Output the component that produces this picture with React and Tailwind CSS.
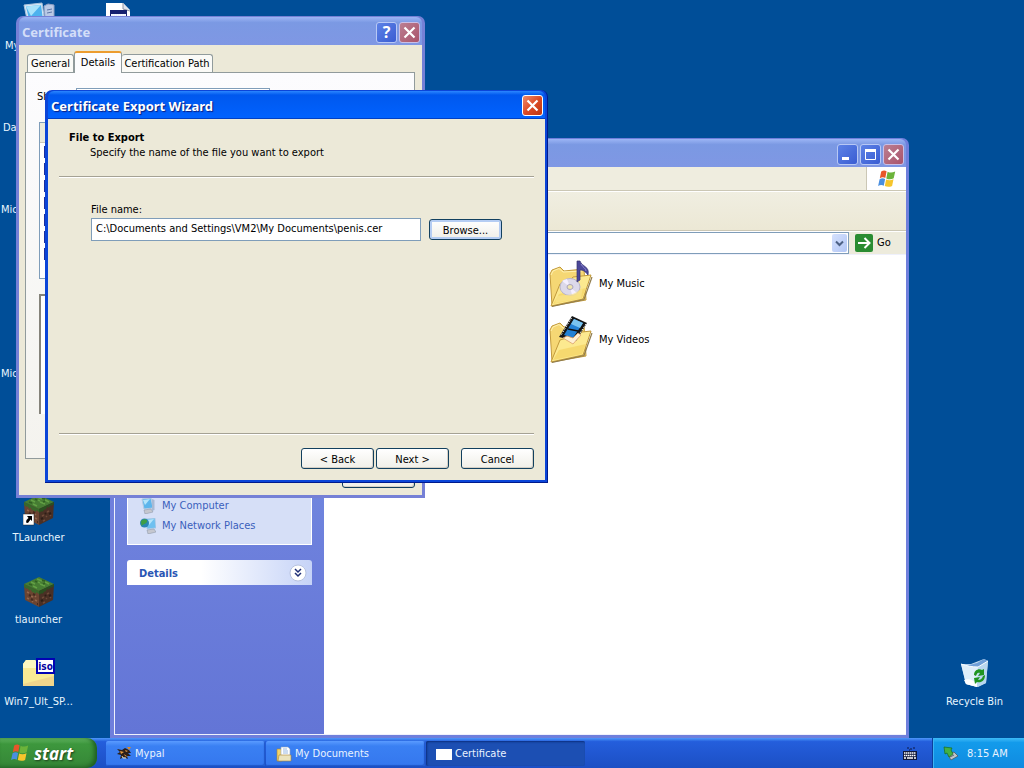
import React from "react";

/* ---------- Icons ---------- */

function WindowsFlag({ className }) {
  return (
    <svg viewBox="0 0 20 18" className={className} aria-hidden="true">
      <path d="M4.2 1.6C6 .4 7.900 .3 9.600 1.300L8.300 8C6.500 7 4.700 7.100 2.800 8.200Z" fill="#e8562a" />
      <path d="M10.600 1.700C12.500 2.700 15 3.100 18.200 1.500L16.700 8.300C14.400 9.600 11.500 9.500 9.300 8.400Z" fill="#6cb33a" />
      <path d="M2.600 9.200C4.500 8.100 6.400 8.100 8.100 9L6.800 15.700C5 14.700 3.100 14.800 1.100 16Z" fill="#4a8fe0" />
      <path d="M9.100 9.500C11.300 10.500 13.700 10.600 16.500 9.300L15.100 15.900C12.800 17.200 10 17.100 7.800 16.100Z" fill="#f6c52c" />
    </svg>
  );
}

function MonitorIcon({ className }) {
  return (
    <svg viewBox="0 0 32 32" className={className} aria-hidden="true">
      <path d="M1 3L19 1L22 20L5 22Z" fill="#d8e6f4" stroke="#a9c4de" />
      <path d="M3 4.500L18 3L20 18L6.500 19.500Z" fill="#4db2ee" />
      <path d="M3 4.500L18 3L8 14Z" fill="#a9e3fb" />
      <path d="M21 4L25 2L31 3L31 25L23 27Z" fill="#b9c9e6" stroke="#8fa1c6" />
      <path d="M24 8L29 7M24 11L29 10" stroke="#5d76a8" />
      <path d="M9 22L19 21L23 28L8 29Z" fill="#e8e6dc" stroke="#a5a295" />
    </svg>
  );
}

function DocumentIcon({ className }) {
  return (
    <svg viewBox="0 0 32 32" className={className} aria-hidden="true">
      <path d="M4 1H21L28 8V31H4Z" fill="#fff" />
      <path d="M21 1V7L28 9" fill="#dfe4ec" stroke="#8d95a5" />
      <rect x="8.500" y="8.500" width="16" height="18" fill="#eef1fb" stroke="#16206e" />
      <rect x="8" y="8" width="17" height="4" fill="#16206e" />
      <path d="M9 13H24" stroke="#fff" strokeDasharray="1 1" />
    </svg>
  );
}

function GrassBlock({ className, shortcut }) {
  return (
    <svg viewBox="0 0 32 32" className={className} aria-hidden="true">
      <path d="M1 8L16 14V31L2 24Z" fill="#6b4431" />
      <path d="M31 8L16 14V31L30 24Z" fill="#4a3025" />
      <path d="M1 8L16 1L31 8L16 15Z" fill="#467c33" />
      <path d="M1 8L16 15V18L13 16V18L10 16V17L7 13V15L4 12V13L1 11Z" fill="#38682a" />
      <path d="M31 8L16 15V19L19 17V18L22 15V16L25 12V14L28 11V12L31 10Z" fill="#2a5020" />
      <path d="M8 6L12 8M14 3L19 5M17 8L22 10M22 6L26 8M10 10L14 12M15 6L17 7" stroke="#62a044" strokeWidth="1.500" />
      <path d="M6 8L9 9M19 4L22 5M12 5L14 6M20 8L22 7" stroke="#2f6122" strokeWidth="1.500" />
      <path d="M4 16L6 17M8 20L10 21M4 22L6 23M12 24L14 25M9 25L10 26M12 20L13 21" stroke="#92664c" strokeWidth="1.500" />
      <path d="M6 19L8 20M10 18L12 19M8 23L10 24M14 28L15 28" stroke="#452a1f" strokeWidth="2" />
      <path d="M19 22L21 21M24 18L26 17M20 27L22 26M27 22L28 21M23 23L24 22" stroke="#6e4a38" strokeWidth="1.500" />
      <path d="M18 25L20 24M26 20L28 19M22 20L23 19" stroke="#2e1e17" strokeWidth="2" />
      {shortcut && (
        <g>
          <rect x="0" y="20" width="11" height="11" fill="#fff" stroke="#222" strokeWidth=".5" />
          <path d="M4 22H9V27L7.500 25.500L5 29L3 28.500L3.500 26L5.500 24Z" fill="#000" />
        </g>
      )}
    </svg>
  );
}

function IsoIcon({ className }) {
  return (
    <svg viewBox="0 0 32 32" className={className} aria-hidden="true">
      <path d="M0 6L3 2H12L14 4H31V28H0Z" fill="#f8e994" />
      <path d="M0 6L3 2H12L14 4V10H0Z" fill="#fdf7c0" />
      <path d="M0 28H31V18L0 26Z" fill="#f0d58c" />
      <rect x="14" y="1" width="17" height="14" fill="#fff" stroke="#0202b4" strokeWidth="2" />
      <text x="22.500" y="12" textAnchor="middle" fontFamily="DejaVu Sans Condensed, sans-serif" fontWeight="700" fontSize="10" fill="#0202a0">
        iso
      </text>
    </svg>
  );
}

function RecycleBin({ className }) {
  return (
    <svg viewBox="0 0 32 32" className={className} aria-hidden="true">
      <path d="M2 6L12 6L25 1L29 3L27 25L19 29L7 26Z" fill="#c3dcf1" />
      <path d="M2 6C9 8 14 6 18 5L25 1L29 3L19 10Z" fill="#6f9fd8" />
      <path d="M2 6C8 8 13 9 19 9L18 29L7 26Z" fill="#deeefa" />
      <path d="M19 9L29 3L27 25L18 29Z" fill="#b9d7ef" />
      <path d="M2 6C8 8 13 9 19 9L29 3" fill="none" stroke="#f6fbff" />
      <path d="M5 22C10 20 14 22 18 26V29L7 26Z" fill="#fff" />
      <path d="M15 17C15 12 20 10 23 12L25 11V17L19 18L21 15C19 14 18 15 17 18Z" fill="#1f9420" />
      <path d="M26 17C26 23 22 25 18 24L16 26L15 20L21 19L19 22C21 22 23 21 24 18Z" fill="#1f9420" />
    </svg>
  );
}

function FolderBack() {
  return (
    <g>
      <path d="M4 14L6 10L14 7L18 11L38 9L40 40L6 46Z" fill="#f5d774" stroke="#c29a3c" />
      <path d="M5 15L7 11L13 8.500L17 12L36 11" fill="none" stroke="#fff1b0" />
    </g>
  );
}

function FolderFront() {
  return (
    <g>
      <path d="M5 46L14 24L24 21L27 17L45 15L37 39Z" fill="#fce98f" stroke="#c29a3c" />
      <path d="M7 44L13 34L40 28L36 38Z" fill="#f2d15e" opacity=".65" />
      <path d="M6 46.500L38 39.500L46 17" fill="none" stroke="#8f7c4e" strokeWidth="1.200" />
    </g>
  );
}

function MusicFolder({ className }) {
  return (
    <svg viewBox="0 0 48 48" className={className} aria-hidden="true">
      <FolderBack />
      <FolderFront />
      <ellipse cx="24" cy="27" rx="10" ry="8.500" fill="#dcd9ea" stroke="#b9b5cc" />
      <path d="M24 27L16 21A10 8 0 0 1 21 19ZM24 27L31 33A10 8 0 0 1 26 35Z" fill="#f4efff" />
      <ellipse cx="24" cy="27" rx="3" ry="2.500" fill="#f1e7ad" stroke="#a9a2c0" />
      <path d="M11 36C22 34 27 37 37 27L35 38L9 43Z" fill="#fae48b" opacity=".7" />
      <path d="M31 1L34 1C36 7 44 6 42 15C39 11 37 10 34 10V20L31 22Z" fill="#4b4799" stroke="#34316f" strokeWidth=".700" />
      <path d="M35 4C37 8 40 8 40 11" stroke="#8d87d1" fill="none" />
    </svg>
  );
}

function VideoFolder({ className }) {
  return (
    <svg viewBox="0 0 48 48" className={className} aria-hidden="true">
      <FolderBack />
      <FolderFront />
      <path d="M26 0L41 7L30 25L13 21Z" fill="#151515" />
      <path d="M28 3L37 7L27 22L18 19Z" fill="#2381d5" />
      <path d="M28 3L37 7L34 12L25 8Z" fill="#7ac4f0" />
      <path d="M22 13L32 15" stroke="#101010" strokeWidth="1.500" />
      <path d="M25.500 2L14.500 20M40 8L29.500 24" stroke="#fff" strokeDasharray="1.500 1.500" />
      <path d="M17 22L27 28L35 19L32 17L27 22L21 20Z" fill="#fff0d2" stroke="#dba06c" strokeWidth=".800" />
    </svg>
  );
}

function NetworkIcon({ className }) {
  return (
    <svg viewBox="0 0 16 16" className={className} aria-hidden="true">
      <path d="M6 1L15 0L16 10L7 11Z" fill="#6fc0f0" stroke="#b4cae2" strokeWidth=".700" />
      <path d="M7 2L14 1L9 7Z" fill="#b5e4fa" />
      <circle cx="4.500" cy="5" r="4.500" fill="#2b86b4" />
      <path d="M1 3C4 0 8 1 7 4C6 6 3 6 1.500 8Z" fill="#3f9f45" />
      <path d="M7 12L14 11L16 14L8 16Z" fill="#c5c7cf" stroke="#8790a3" strokeWidth=".500" />
    </svg>
  );
}

function ComputerSmall({ className }) {
  return (
    <svg viewBox="0 0 16 16" className={className} aria-hidden="true">
      <path d="M2 1L11 0L13 10L4 11Z" fill="#5db5ec" stroke="#b4cae2" />
      <path d="M3 2L10 1L5 7Z" fill="#b5e4fa" />
      <path d="M12 1L14.500 2V12L12 13Z" fill="#a8b9d4" />
      <path d="M4 12L11 11L13 14L5 16Z" fill="#c5c7cf" stroke="#8790a3" strokeWidth=".500" />
    </svg>
  );
}

function BirdIcon({ className }) {
  return (
    <svg viewBox="0 0 16 16" className={className} aria-hidden="true">
      <path d="M1 3L6 4L9 2L13 4L15 7L12 7L15 10L11 10L12 13L8 11L4 13L5 9L1 8L4 6Z" fill="#2c1e18" />
      <path d="M4 5L8 6L5 8ZM9 4L12 5L10 6ZM8 8L12 11L9 10Z" fill="#e69a3c" />
      <path d="M11 1L15 1L13 4Z" fill="#d98a2d" />
      <path d="M6 10L7 12L10 12" stroke="#f1d9a4" fill="none" />
    </svg>
  );
}

function DocsFolderIcon({ className }) {
  return (
    <svg viewBox="0 0 16 16" className={className} aria-hidden="true">
      <path d="M1 3H5L6 5V15H1Z" fill="#f3d36c" stroke="#a88432" strokeWidth=".600" />
      <path d="M5 1H12L14 3V10H5Z" fill="#fff" stroke="#93a6be" strokeWidth=".600" />
      <path d="M7 3H11M7 5H12M7 7H12" stroke="#7fa6dc" strokeWidth=".800" />
      <path d="M3 9H15V15H2Z" fill="#ebe3bd" stroke="#a88432" strokeWidth=".600" />
    </svg>
  );
}

function KeyboardIcon({ className }) {
  return (
    <svg viewBox="0 0 14 13" className={className} aria-hidden="true">
      <path d="M4 1H6M7 2H9M10 1H12M6 3H7" stroke="#0b1646" />
      <rect x="0" y="4" width="14" height="9" fill="#10183a" />
      <path d="M1 6H13M1 8.500H13" stroke="#fff" strokeWidth="1.500" strokeDasharray="1.500 .500" />
      <path d="M1 11H3M4 11H10M11 11H13" stroke="#fff" strokeWidth="1.500" />
    </svg>
  );
}

function EjectIcon({ className }) {
  return (
    <svg viewBox="0 0 16 16" className={className} aria-hidden="true">
      <path d="M5 9L11 6L15 10L8 14Z" fill="#bfc5c9" stroke="#4e5a60" strokeWidth=".800" />
      <path d="M7 11L11 9" stroke="#5b666d" />
      <path d="M1 1L9 2L8 4L10 8L6 11L4 7L2 8Z" fill="#43b143" stroke="#176b1d" strokeWidth=".700" />
    </svg>
  );
}

/* ---------- Window parts ---------- */

function CrossGlyph() {
  return (
    <svg viewBox="0 0 19 19" className="size-full" aria-hidden="true">
      <path d="M4.500 4.500L14.500 14.500M14.500 4.500L4.500 14.500" stroke="#fff" strokeWidth="2.200" />
    </svg>
  );
}

const captionTone = {
  blue: "border-[#b7c8f5] bg-linear-to-br from-[#5d82e6] to-[#3a5cd2]",
  faded: "border-[#c9bfe6] bg-linear-to-br from-[#bb7f92] to-[#a9536b]",
  red: "border-white bg-linear-to-br from-[#ee8a6a] via-[#dc4a25] to-[#bd3612]",
};

function CaptionButton({ label, tone, children }) {
  return (
    <button type="button" aria-label={label} className={`size-[21px] shrink-0 rounded-[3px] border ${captionTone[tone]}`}>
      {children}
    </button>
  );
}

function TitleBar({ title, active, children }) {
  const tone = active
    ? "bg-linear-to-b from-[#2b86ff] via-[#0058ee] via-15% to-[#0062ff] text-white border-b border-[#0040c4] [text-shadow:1px_1px_1px_#0a1e80]"
    : "bg-linear-to-b from-[#9cb5f5] via-[#7b99e3] via-20% to-[#7f97e4] text-[#d3def8]";
  return (
    <header className={`flex h-[28px] shrink-0 items-center gap-[2px] rounded-t-[6px] pt-[2px] pr-[2px] pl-[3px] ${tone}`}>
      <h2 className="flex-1 font-['Noto_Sans','Open_Sans',sans-serif] text-[13px] leading-4 font-bold">{title}</h2>
      {children}
    </header>
  );
}

function PushButton({ children, focused }) {
  const ring = focused ? "shadow-[inset_0_0_0_2px_#b5cdf3]" : "shadow-[inset_-1px_-1px_0_#d6d0c5]";
  return (
    <button type="button" className={`h-[21px] w-[73px] rounded-[3px] border border-[#12405f] bg-linear-to-b from-white to-[#f0efe8] pt-px text-center leading-none ${ring}`}>
      {children}
    </button>
  );
}

function Rule() {
  return <hr className="border-0 border-t border-[#a5a294] shadow-[0_1px_0_#fff]" />;
}

/* ---------- Windows ---------- */

function ExplorerWindow() {
  return (
    <section aria-label="My Documents" className="absolute top-[138px] right-[115px] bottom-0 left-[110px] flex flex-col rounded-t-[7px] bg-[#6f7fdc] pt-px pr-[3px] pb-[3px] pl-[4px]">
      <TitleBar title="">
        <CaptionButton label="Minimize" tone="blue">
          <svg viewBox="0 0 19 19" className="size-full" aria-hidden="true"><rect x="4" y="12" width="7" height="3" fill="#fff" /></svg>
        </CaptionButton>
        <CaptionButton label="Maximize" tone="blue">
          <svg viewBox="0 0 19 19" className="size-full" aria-hidden="true"><path d="M4.500 5V14.500H14.500V5" fill="none" stroke="#fff" /><rect x="4" y="4" width="11" height="3" fill="#fff" /></svg>
        </CaptionButton>
        <CaptionButton label="Close" tone="faded"><CrossGlyph /></CaptionButton>
      </TitleBar>
      <div className="flex h-[24px] shrink-0 justify-end border-b border-[#cbc7b5] bg-[#efeddf]">
        <div className="flex w-[40px] items-center justify-center border-l border-[#cbc7b5] bg-white">
          <WindowsFlag className="h-[18px] w-[20px]" />
        </div>
      </div>
      <div className="h-[40px] shrink-0 border-t border-b border-t-white border-b-[#cbc7b5] bg-linear-to-b from-[#f0eee1] to-[#ece8d5]" />
      <div className="flex h-[23px] shrink-0 items-end border-t border-white bg-[#edebdc]">
        <div className="flex h-[22px] flex-1 items-center justify-end border border-[#7f9db9] bg-white pr-px">
          <button type="button" aria-label="Address list" className="flex h-[18px] w-[15px] items-center justify-center rounded-[2px] bg-linear-to-br from-[#d5e1fd] to-[#b2c6f5]">
            <svg viewBox="0 0 9 7" className="h-[7px] w-[9px]" aria-hidden="true"><path d="M1 1.500L4.500 5L8 1.500" fill="none" stroke="#4d6185" strokeWidth="2" /></svg>
          </button>
        </div>
        <button type="button" className="flex h-[22px] w-[57px] items-center gap-[4px] pl-[6px]">
          <svg viewBox="0 0 18 18" className="size-[18px]" aria-hidden="true">
            <rect width="18" height="18" rx="2" fill="#2a8c32" />
            <path d="M3 9H14M9.500 4L14.500 9L9.500 14" fill="none" stroke="#fff" strokeWidth="2" />
          </svg>
          Go
        </button>
      </div>
      <div className="flex min-h-0 flex-1 border border-r-0 border-[#eff1fc] bg-white">
        <aside className="flex w-[209px] shrink-0 flex-col gap-[15px] bg-linear-to-b from-[#7b9ee6] via-[#6d80dc] via-60% to-[#6375d6] p-[12px]">
          <nav aria-label="Other places" className="flex h-[278px] flex-col justify-end gap-[4px] border border-white bg-[#d6dff7] pb-[10px] pl-[12px] text-[#3a60bc]">
            <a href="#computer" className="flex h-[16px] items-center gap-[6px]"><ComputerSmall className="size-[16px]" />My Computer</a>
            <a href="#network" className="flex h-[16px] items-center gap-[6px]"><NetworkIcon className="size-[16px]" />My Network Places</a>
          </nav>
          <button type="button" className="flex h-[25px] shrink-0 items-center justify-between rounded-t-[3px] bg-linear-to-r from-white from-40% to-[#c6d3f7] pr-[5px] pl-[12px] font-bold text-[#2a56b4]">
            <span className="pt-[2px]">Details</span>
            <svg viewBox="0 0 18 18" className="size-[18px]" aria-hidden="true">
              <circle cx="9" cy="9" r="8" fill="#fff" stroke="#b7c2de" />
              <path d="M6 5L9 8L12 5M6 9L9 12L12 9" fill="none" stroke="#1f2f76" strokeWidth="1.500" />
            </svg>
          </button>
        </aside>
        <div className="grid flex-1 auto-rows-[56px] grid-cols-[222px_1fr] content-start pt-px">
          <div className="col-start-2 flex items-center gap-[5px]"><MusicFolder className="size-[48px]" />My Music</div>
          <div className="col-start-2 flex items-center gap-[5px]"><VideoFolder className="size-[48px]" />My Videos</div>
        </div>
      </div>
    </section>
  );
}

function CertificateWindow() {
  return (
    <section aria-label="Certificate" className="absolute top-[16px] left-[16px] flex h-[482px] w-[409px] flex-col rounded-t-[7px] bg-[#7580d6] px-[3px] pt-px pb-[3px]">
      <TitleBar title="Certificate">
        <CaptionButton label="Help" tone="blue">
          <span className="block font-['Noto_Sans',sans-serif] text-[16px] leading-[19px] font-bold text-white">?</span>
        </CaptionButton>
        <CaptionButton label="Close" tone="faded"><CrossGlyph /></CaptionButton>
      </TitleBar>
      <div className="flex flex-1 flex-col bg-[#ece9d8] pt-[6px] pr-[7px] pb-[7px] pl-[6px]">
        <div role="tablist" className="flex items-end pl-[2px]">
          <button type="button" role="tab" className="h-[18px] w-[47px] rounded-t-[3px] border border-b-0 border-[#919b9c] bg-[#fafaf7] pt-px">General</button>
          <button type="button" role="tab" aria-selected="true" className="relative -mb-px h-[22px] w-[48px] rounded-t-[3px] border border-t-2 border-b-0 border-[#919b9c] border-t-[#ec9c2e] bg-[#fcfcfe]">Details</button>
          <button type="button" role="tab" className="h-[18px] w-[91px] rounded-t-[3px] border border-b-0 border-l-0 border-[#919b9c] bg-[#fafaf7] pt-px">Certification Path</button>
        </div>
        <div role="tabpanel" className="flex h-[387px] flex-col border border-[#919b9c] bg-linear-to-b from-[#fcfcfe] to-[#f4f3ee] px-[13px] pt-[15px]">
          <div className="flex h-[34px] items-start">
            <label htmlFor="show" className="-ml-[2px] w-[38px] pt-[2px]">Sh</label>
            <select id="show" className="ml-px h-[20px] w-[194px] border border-[#7f9db9] bg-white" />
          </div>
          <div className="h-[157px] shrink-0 border border-[#7f9db9] bg-white">
            <div className="h-[20px] border-b border-[#cbc7b8] bg-[#ebeadb]" />
            <ul className="flex flex-col gap-[5px] pt-[3px] pl-[4px]">
              {[0, 1, 2, 3, 4, 5, 6].map((n) => (
                <li key={n} className="h-[12px] w-[10px] border border-[#1c2f9c] bg-white" />
              ))}
            </ul>
          </div>
          <div className="mt-[15px] h-[120px] shrink-0 border-t-2 border-l-2 border-[#85837a] bg-white" />
        </div>
        <div className="mt-auto flex justify-end"><PushButton /></div>
      </div>
    </section>
  );
}

function WizardWindow() {
  return (
    <section aria-label="Certificate Export Wizard" className="absolute top-[90px] left-[45px] flex h-[393px] w-[503px] flex-col rounded-t-[7px] border-r border-b border-[#001a8c] bg-[#0b45d8] pt-px pr-[2px] pb-[2px] pl-[3px]">
      <TitleBar title="Certificate Export Wizard" active>
        <CaptionButton label="Close" tone="red"><CrossGlyph /></CaptionButton>
      </TitleBar>
      <div className="flex flex-1 flex-col bg-[#ece9d8] px-[11px] pb-[11px]">
        <div className="px-[10px] pt-[11px]">
          <h3 className="leading-[15px] font-bold">File to Export</h3>
          <p className="pl-[21px] leading-[15px]">Specify the name of the file you want to export</p>
        </div>
        <div className="mt-[16px]"><Rule /></div>
        <div className="mt-[25px] pl-[32px]">
          <label htmlFor="file" className="block leading-[16px]">File name:</label>
          <div className="flex items-center gap-[8px]">
            <input id="file" type="text" defaultValue="C:\Documents and Settings\VM2\My Documents\penis.cer" className="h-[23px] w-[330px] border border-[#7f9db9] bg-white px-[4px] pb-[3px] outline-none" />
            <PushButton focused>Browse...</PushButton>
          </div>
        </div>
        <div className="mt-auto"><Rule /></div>
        <div className="mt-[14px] flex justify-end gap-[2px]">
          <PushButton>&lt; Back</PushButton>
          <PushButton>Next &gt;</PushButton>
          <div className="ml-[10px] flex"><PushButton>Cancel</PushButton></div>
        </div>
      </div>
    </section>
  );
}

/* ---------- Desktop ---------- */

function DesktopIcon({ label, children, start }) {
  return (
    <li className={`flex h-[82px] w-[77px] flex-col gap-[5px] pt-[2px] text-[#e9f6ff] ${start ? "items-start" : "items-center"}`}>
      <div className="size-[32px] self-center">{children}</div>
      <span className="leading-[14px] whitespace-nowrap">{label}</span>
    </li>
  );
}

function Desktop() {
  return (
    <main className="relative flex flex-1 justify-between overflow-hidden bg-[#004e98]">
      <div className="flex">
        <ul className="flex flex-col">
          <DesktopIcon start label={<span className="pl-[5px]">My</span>}><MonitorIcon className="size-[32px]" /></DesktopIcon>
          <DesktopIcon start label={<span className="pl-[3px]">Da</span>} />
          <DesktopIcon start label={<span className="pl-px">Mic</span>} />
          <DesktopIcon />
          <DesktopIcon start label={<span className="pl-px">Mic</span>} />
          <DesktopIcon />
          <DesktopIcon label="TLauncher"><GrassBlock shortcut className="size-[32px]" /></DesktopIcon>
          <DesktopIcon label="tlauncher"><GrassBlock className="size-[32px]" /></DesktopIcon>
          <DesktopIcon label="Win7_Ult_SP..."><IsoIcon className="size-[32px]" /></DesktopIcon>
        </ul>
        <ul className="pl-[2px]">
          <DesktopIcon><DocumentIcon className="size-[32px]" /></DesktopIcon>
        </ul>
      </div>
      <ul className="flex flex-col justify-end pr-[11px]">
        <DesktopIcon label="Recycle Bin"><RecycleBin className="size-[32px]" /></DesktopIcon>
      </ul>
      <ExplorerWindow />
      <CertificateWindow />
      <WizardWindow />
    </main>
  );
}

function TaskButton({ icon, label, pressed }) {
  const tone = pressed
    ? "bg-[#1c4fb3] shadow-[inset_1px_1px_2px_#0b2f7e]"
    : "bg-linear-to-b from-[#5a9bff] via-[#3a80f3] via-20% to-[#3577ee] shadow-[inset_-1px_-1px_1px_#2057c8]";
  return (
    <button type="button" aria-pressed={Boolean(pressed)} className={`flex h-[25px] w-[159px] items-center gap-[3px] rounded-[2px] pt-px pl-[10px] ${tone}`}>
      {icon}
      {label}
    </button>
  );
}

function Taskbar() {
  return (
    <footer className="flex h-[30px] shrink-0 items-center bg-linear-to-b from-[#4f97fb] via-[#245edc] via-12% to-[#1c4fc4] text-[#e9f3ff]">
      <button type="button" className="flex h-[30px] w-[97px] items-center gap-[4px] rounded-r-[10px] bg-linear-to-b from-[#62b562] via-[#3d973d] via-20% to-[#358637] pl-[10px] font-['Open_Sans','Noto_Sans',sans-serif] text-[17px] leading-none font-bold text-white italic shadow-[inset_-3px_-1px_4px_#1f5f22] [text-shadow:1px_1px_2px_#1c3f1c]">
        <WindowsFlag className="h-[18px] w-[20px]" />
        start
      </button>
      <div className="flex flex-1 gap-px pt-px pl-[9px]">
        <TaskButton icon={<BirdIcon className="size-[16px]" />} label="Mypal" />
        <TaskButton icon={<DocsFolderIcon className="size-[16px]" />} label="My Documents" />
        <TaskButton pressed icon={<span className="h-[11px] w-[16px] bg-white" />} label="Certificate" />
      </div>
      <KeyboardIcon className="mr-[15px] h-[13px] w-[14px]" />
      <div className="flex h-[30px] w-[92px] items-center gap-[8px] border-l border-[#0d3f9b] bg-linear-to-b from-[#3cbcf8] via-[#139beb] via-15% to-[#108ae0] pt-px pl-[10px] shadow-[inset_1px_0_0_#3ab4f4]">
        <EjectIcon className="size-[16px]" />
        <time>8:15 AM</time>
      </div>
    </footer>
  );
}

export default function App() {
  return (
    <div className="flex h-screen flex-col overflow-hidden font-['DejaVu_Sans_Condensed','Noto_Sans',sans-serif] text-[11px] leading-[14px] text-black">
      <Desktop />
      <Taskbar />
    </div>
  );
}
